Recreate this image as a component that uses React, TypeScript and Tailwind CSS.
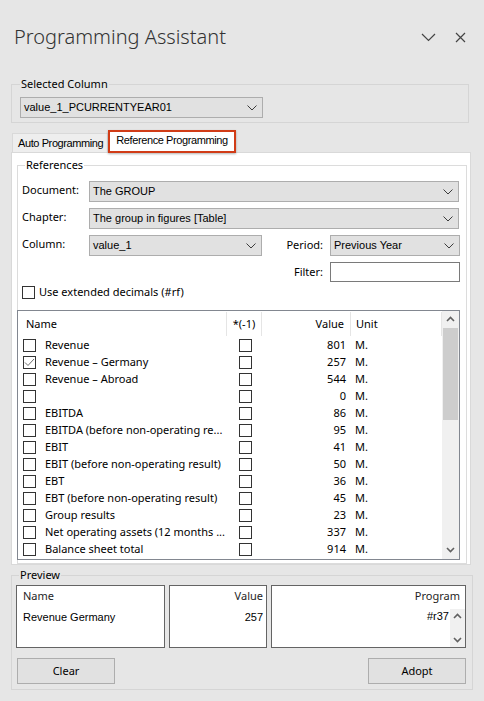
import React from "react";

const ui = "font-['Noto_Sans',sans-serif] text-[11px]";
const ms = "font-['Liberation_Sans',Arial,sans-serif] text-[11px]";

const rows: { name: string; value: string; checked?: boolean }[] = [
  { name: "Revenue", value: "801" },
  { name: "Revenue – Germany", value: "257", checked: true },
  { name: "Revenue – Abroad", value: "544" },
  { name: "", value: "0" },
  { name: "EBITDA", value: "86" },
  { name: "EBITDA (before non-operating re...", value: "95" },
  { name: "EBIT", value: "41" },
  { name: "EBIT (before non-operating result)", value: "50" },
  { name: "EBT", value: "36" },
  { name: "EBT (before non-operating result)", value: "45" },
  { name: "Group results", value: "23" },
  { name: "Net operating assets (12 months ...", value: "337" },
  { name: "Balance sheet total", value: "914" },
];

const Chevron = () => (
  <svg width="10" height="6" viewBox="0 0 10 6">
    <path d="M0.5 0.5 L5 5 L9.5 0.5" fill="none" stroke="#3c3c3c" strokeWidth="1" />
  </svg>
);

const ArrowUp = () => (
  <svg width="9" height="6" viewBox="0 0 9 6">
    <path d="M1 5 L4.5 1.5 L8 5" fill="none" stroke="#606060" strokeWidth="1.6" />
  </svg>
);

const ArrowDown = () => (
  <svg width="9" height="6" viewBox="0 0 9 6">
    <path d="M1 1 L4.5 4.5 L8 1" fill="none" stroke="#606060" strokeWidth="1.6" />
  </svg>
);

const Select = ({ value, className }: { value: string; className: string }) => (
  <div
    className={`flex h-[21px] items-center justify-between border border-[#adadad] bg-[#e1e1e1] pl-[3px] pr-[5px] text-black ${ms} ${className}`}
  >
    <span>{value}</span>
    <Chevron />
  </div>
);

const Box = ({ checked }: { checked?: boolean }) => (
  <span className="flex h-[13px] w-[13px] shrink-0 items-center justify-center border border-[#333] bg-white">
    {checked && (
      <svg width="11" height="9" viewBox="0 0 11 9">
        <path d="M1 4.5 L4 7.5 L10 1" fill="none" stroke="#6b6b6b" strokeWidth="1" />
      </svg>
    )}
  </span>
);

const Label = ({ children }: { children: React.ReactNode }) => (
  <span className="w-[67px] shrink-0 -translate-y-[1px] text-black">{children}</span>
);

export default function App() {
  return (
    <div className={`h-[701px] w-[484px] overflow-hidden bg-[#e6e6e6] ${ui}`}>
      <div className="flex h-[74px] items-center justify-between pl-[14px] pr-[18px]">
        <span className="font-['Noto_Sans',sans-serif] text-[20px] font-light text-[#333]">
          Programming Assistant
        </span>
        <div className="flex items-center gap-[19px]">
          <svg width="15" height="9" viewBox="0 0 15 9">
            <path d="M1 1 L7.5 7.5 L14 1" fill="none" stroke="#444" strokeWidth="1.2" />
          </svg>
          <svg width="11" height="11" viewBox="0 0 11 11">
            <path d="M1 1 L10 10 M10 1 L1 10" fill="none" stroke="#444" strokeWidth="1.2" />
          </svg>
        </div>
      </div>

      <fieldset className="ml-[11px] w-[458px] border border-[#d5d5d5] px-[8px] pb-[4px]">
        <legend className="px-[1px] leading-[20px] text-black">Selected Column</legend>
        <Select value="value_1_PCURRENTYEAR01" className="mt-[3px] w-[243px]" />
      </fieldset>

      <div className="mt-[8px] flex h-[21px] items-end pl-[12px]">
        <div className={`flex h-[19px] items-center border border-b-0 border-[#d9d9d9] bg-[#eeeeee] pl-[5px] pr-[4px] tracking-[-0.4px] ${ms}`}>
          Auto Programming
        </div>
        <div
          className={`relative z-10 -mb-px flex h-[23px] items-center border-2 border-[#d13c17] bg-white px-[6px] pb-[3px] tracking-[-0.4px] shadow-[0_1px_2px_rgba(0,0,0,0.3)] ${ms}`}
        >
          Reference Programming
        </div>
      </div>

      <div className="ml-[11px] h-[413px] w-[460px] border border-[#d9d9d9] bg-white pl-[5px] pt-[3px]">
        <fieldset className="w-[449px] border border-[#dcdcdc] pb-[3px] pl-[4px] pr-[6px]">
          <legend className="ml-[3px] px-[1px] leading-[18px] text-black">References</legend>
          <div className="mt-[7px] flex flex-col gap-[6px]">
            <div className="flex items-center">
              <Label>Document:</Label>
              <Select value="The GROUP" className="w-[370px]" />
            </div>
            <div className="flex items-center">
              <Label>Chapter:</Label>
              <Select value="The group in figures [Table]" className="w-[370px]" />
            </div>
            <div className="flex items-center">
              <Label>Column:</Label>
              <Select value="value_1" className="w-[173px]" />
              <span className="w-[68px] pr-[7px] text-right text-black">Period:</span>
              <Select value="Previous Year" className="w-[130px]" />
            </div>
            <div className="flex items-center justify-end">
              <span className="pr-[7px] text-black">Filter:</span>
              <div className="h-[20px] w-[130px] border border-[#7a7a7a] bg-white" />
            </div>
          </div>
          <div className="mt-[2px] flex items-center gap-[4px]">
            <Box />
            <span className="text-black">Use extended decimals (#rf)</span>
          </div>

          <div className="-ml-[5px] mt-[9px] flex h-[250px] w-[443px] border border-[#828790] bg-white">
            <div className="flex flex-1 flex-col">
              <div className="flex h-[26px] items-center text-black">
                <div className="h-[24px] w-[209px] border-r border-[#e5e5e5] pl-[8px] leading-[23px]">Name</div>
                <div className="h-[24px] w-[35px] border-r border-[#e5e5e5] text-center leading-[23px]">*(-1)</div>
                <div className="h-[24px] w-[89px] border-r border-[#e5e5e5] pr-[6px] text-right leading-[23px]">Value</div>
                <div className="h-[24px] flex-1 border-r border-[#e5e5e5] pl-[5px] leading-[23px]">Unit</div>
              </div>
              {rows.map((r, i) => (
                <div key={i} className="flex h-[17px] items-center text-black">
                  <div className="flex w-[209px] items-center gap-[9px] overflow-hidden whitespace-nowrap pl-[5px]">
                    <Box checked={r.checked} />
                    <span>{r.name}</span>
                  </div>
                  <div className="flex w-[35px] justify-center pl-[1px]">
                    <Box />
                  </div>
                  <div className="w-[89px] pr-[5px] text-right">{r.value}</div>
                  <div className="flex-1 pl-[4px]">M.</div>
                </div>
              ))}
            </div>
            <div className="flex w-[17px] flex-col bg-[#f0f0f0]">
              <div className="flex h-[17px] items-center justify-center">
                <ArrowUp />
              </div>
              <div className="mx-[1px] h-[92px] bg-[#cdcdcd]" />
              <div className="flex-1" />
              <div className="flex h-[17px] items-center justify-center">
                <ArrowDown />
              </div>
            </div>
          </div>
        </fieldset>
      </div>

      <fieldset className="ml-[11px] w-[462px] border border-[#d5d5d5] pb-[5px] pl-[4px] pr-[6px]">
        <legend className="ml-[3px] px-[1px] leading-[20px] text-black">Preview</legend>
        <div className="flex gap-[4px]">
          <div className="h-[63px] w-[149px] border border-[#646464] bg-white pl-[6px] pt-[2px]">
            <div className="leading-[16px] text-[#1e1e1e]">Name</div>
            <div className={`mt-[5px] text-black ${ms}`}>Revenue Germany</div>
          </div>
          <div className="h-[63px] w-[98px] border border-[#646464] bg-white pr-[3px] pt-[2px] text-right">
            <div className="leading-[16px] text-[#1e1e1e]">Value</div>
            <div className={`mt-[5px] text-black ${ms}`}>257</div>
          </div>
          <div className="flex h-[63px] w-[195px] flex-col border border-[#646464] bg-white pt-[2px]">
            <div className="pr-[5px] text-right leading-[16px] text-[#1e1e1e]">Program</div>
            <div className="mt-[5px] flex flex-1">
              <div className={`flex-1 pr-[1px] text-right leading-[14px] text-black ${ms}`}>#r37</div>
              <div className="flex w-[15px] flex-col justify-between bg-[#f0f0f0] py-[4px]">
                <div className="flex justify-center">
                  <ArrowUp />
                </div>
                <div className="flex justify-center">
                  <ArrowDown />
                </div>
              </div>
            </div>
          </div>
        </div>
        <div className="mt-[10px] flex justify-between pl-[1px]">
          <button className="h-[26px] w-[98px] border border-[#adadad] bg-[#e1e1e1] text-black">Clear</button>
          <button className="h-[26px] w-[98px] border border-[#adadad] bg-[#e1e1e1] text-black">Adopt</button>
        </div>
      </fieldset>
    </div>
  );
}
